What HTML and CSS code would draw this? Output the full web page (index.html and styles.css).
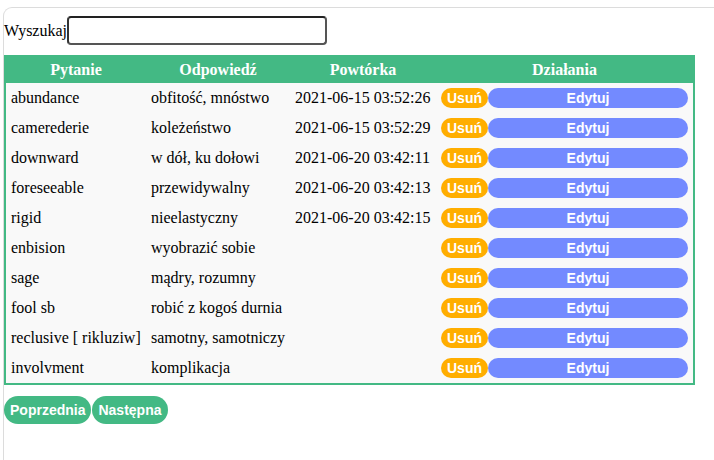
FILE: index.html
```html
<!DOCTYPE html>
<html lang="pl">
<head>
<meta charset="utf-8">
<title>Słówka</title>
<link rel="stylesheet" href="styles.css">
</head>
<body>
<div class="card">
  <div class="search">
    <label class="search-label" for="q">Wyszukaj</label><input id="q" class="search-input" type="text">
  </div>
  <table class="grid">
    <colgroup>
      <col class="c1"><col class="c2"><col class="c3"><col class="c4">
    </colgroup>
    <thead>
      <tr><th>Pytanie</th><th>Odpowiedź</th><th>Powtórka</th><th>Działania</th></tr>
    </thead>
    <tbody>
      <tr><td>abundance</td><td>obfitość, mnóstwo</td><td>2021-06-15 03:52:26</td><td><div class="actions"><button class="btn del">Usuń</button><button class="btn edit">Edytuj</button></div></td></tr>
      <tr><td>camerederie</td><td>koleżeństwo</td><td>2021-06-15 03:52:29</td><td><div class="actions"><button class="btn del">Usuń</button><button class="btn edit">Edytuj</button></div></td></tr>
      <tr><td>downward</td><td>w dół, ku dołowi</td><td>2021-06-20 03:42:11</td><td><div class="actions"><button class="btn del">Usuń</button><button class="btn edit">Edytuj</button></div></td></tr>
      <tr><td>foreseeable</td><td>przewidywalny</td><td>2021-06-20 03:42:13</td><td><div class="actions"><button class="btn del">Usuń</button><button class="btn edit">Edytuj</button></div></td></tr>
      <tr><td>rigid</td><td>nieelastyczny</td><td>2021-06-20 03:42:15</td><td><div class="actions"><button class="btn del">Usuń</button><button class="btn edit">Edytuj</button></div></td></tr>
      <tr><td>enbision</td><td>wyobrazić sobie</td><td></td><td><div class="actions"><button class="btn del">Usuń</button><button class="btn edit">Edytuj</button></div></td></tr>
      <tr><td>sage</td><td>mądry, rozumny</td><td></td><td><div class="actions"><button class="btn del">Usuń</button><button class="btn edit">Edytuj</button></div></td></tr>
      <tr><td>fool sb</td><td>robić z kogoś durnia</td><td></td><td><div class="actions"><button class="btn del">Usuń</button><button class="btn edit">Edytuj</button></div></td></tr>
      <tr><td>reclusive [ rikluziw]</td><td>samotny, samotniczy</td><td></td><td><div class="actions"><button class="btn del">Usuń</button><button class="btn edit">Edytuj</button></div></td></tr>
      <tr><td>involvment</td><td>komplikacja</td><td></td><td><div class="actions"><button class="btn del">Usuń</button><button class="btn edit">Edytuj</button></div></td></tr>
    </tbody>
  </table>
  <div class="pager">
    <button class="btn page">Poprzednia</button><button class="btn page">Następna</button>
  </div>
</div>
</body>
</html>
```
FILE: styles.css
```css
html, body {
  margin: 0;
  padding: 0;
  background: #fff;
  overflow: hidden;
}
body {
  font-family: "Liberation Serif", "Times New Roman", serif;
  font-size: 16px;
  color: #000;
  width: 714px;
  height: 460px;
}
.card {
  margin: 7px 0 0 3px;
  border-top: 1px solid #dcdcdc;
  border-left: 1px solid #dcdcdc;
  border-top-left-radius: 9px;
  height: 460px;
  padding-top: 8px;
  box-sizing: border-box;
}
.search {
  display: flex;
  align-items: center;
  height: 29px;
}
.search-label {
  font-size: 16px;
}
.search-input {
  box-sizing: border-box;
  width: 260px;
  height: 29px;
  margin: 0;
  border: 2px solid #555;
  border-top-color: #222;
  border-left-color: #333;
  border-radius: 4px;
  padding: 0 4px;
  background: #fff;
  font: 14px "Liberation Sans", Arial, sans-serif;
}
.grid {
  margin-top: 10px;
  border: 2px solid #43b984;
  border-collapse: separate;
  border-spacing: 0;
  table-layout: fixed;
  width: 691px;
  background: #f9f9f9;
}
.c1 { width: 140px; }
.c2 { width: 144px; }
.c3 { width: 146px; }
.c4 { width: 257px; }
.grid th {
  background: #43b984;
  color: #fff;
  font-weight: bold;
  padding: 4px 5px;
  line-height: 18px;
  text-align: center;
}
.grid td {
  padding: 5px 5px;
  line-height: 20px;
  height: 20px;
  white-space: nowrap;
  background: #f9f9f9;
  text-align: left;
}
.actions {
  display: flex;
  gap: 0;
}
.btn {
  font-family: "Liberation Sans", Arial, sans-serif;
  font-weight: bold;
  font-size: 14px;
  color: #fff;
  border: none;
  margin: 0;
  cursor: pointer;
}
.del {
  background: #ffae00;
  height: 20px;
  line-height: 20px;
  padding: 0 6px;
  border-radius: 10px;
}
.edit {
  flex: 1;
  background: #738aff;
  height: 20px;
  line-height: 20px;
  padding: 0 6px;
  border-radius: 10px;
}
.pager {
  display: flex;
  gap: 1px;
  margin-top: 11px;
}
.page {
  background: #43b984;
  height: 28px;
  line-height: 28px;
  padding: 0 6px;
  border-radius: 14px;
}
```
